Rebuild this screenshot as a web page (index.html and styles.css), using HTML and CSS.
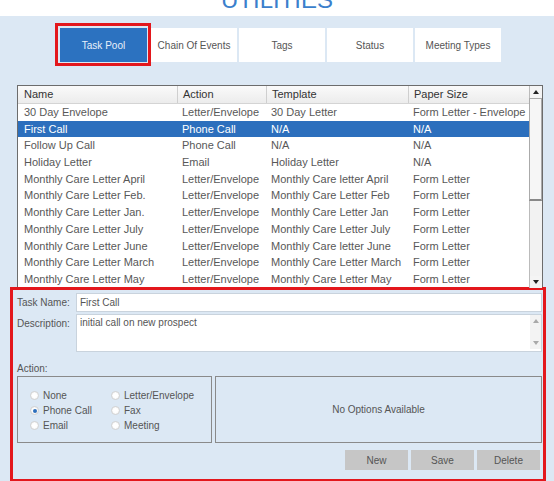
FILE: index.html
```html
<!DOCTYPE html>
<html lang="en">
<head>
  <meta charset="UTF-8" />
  <title>Utilities - Task Pool</title>
  <link rel="stylesheet" href="styles.css">
</head>
<body>

<header class="title">
  <h1>UTILITIES</h1>
</header>

<nav class="tabs">
  <div class="tab-mark">
    <span class="tab active">Task Pool</span>
  </div>
  <span class="tab">Chain Of Events</span>
  <span class="tab">Tags</span>
  <span class="tab">Status</span>
  <span class="tab">Meeting Types</span>
</nav>

<section class="grid">
  <div class="grid-body">
    <div class="row head">
      <span>Name</span><span>Action</span><span>Template</span><span>Paper Size</span>
    </div>
    <div class="row"><span>30 Day Envelope</span><span>Letter/Envelope</span><span>30 Day Letter</span><span>Form Letter - Envelope</span></div>
    <div class="row selected"><span>First Call</span><span>Phone Call</span><span>N/A</span><span>N/A</span></div>
    <div class="row"><span>Follow Up Call</span><span>Phone Call</span><span>N/A</span><span>N/A</span></div>
    <div class="row"><span>Holiday Letter</span><span>Email</span><span>Holiday Letter</span><span>N/A</span></div>
    <div class="row"><span>Monthly Care Letter April</span><span>Letter/Envelope</span><span>Monthly Care letter April</span><span>Form Letter</span></div>
    <div class="row"><span>Monthly Care Letter Feb.</span><span>Letter/Envelope</span><span>Monthly Care Letter Feb</span><span>Form Letter</span></div>
    <div class="row"><span>Monthly Care Letter Jan.</span><span>Letter/Envelope</span><span>Monthly Care Letter Jan</span><span>Form Letter</span></div>
    <div class="row"><span>Monthly Care Letter July</span><span>Letter/Envelope</span><span>Monthly Care Letter July</span><span>Form Letter</span></div>
    <div class="row"><span>Monthly Care Letter June</span><span>Letter/Envelope</span><span>Monthly Care letter June</span><span>Form Letter</span></div>
    <div class="row"><span>Monthly Care Letter March</span><span>Letter/Envelope</span><span>Monthly Care Letter March</span><span>Form Letter</span></div>
    <div class="row"><span>Monthly Care Letter May</span><span>Letter/Envelope</span><span>Monthly Care Letter May</span><span>Form Letter</span></div>
  </div>
  <div class="scrollbar">
    <span class="arrow up"></span>
    <span class="thumb"></span>
    <span class="track"></span>
    <span class="arrow down"></span>
  </div>
</section>

<section class="editor">
  <div class="field">
    <label>Task Name:</label>
    <div class="input">First Call</div>
  </div>
  <div class="field">
    <label>Description:</label>
    <div class="input textarea">
      <span>initial call on new prospect</span>
      <span class="ta-scroll"><i class="tri up"></i><i class="tri down"></i></span>
    </div>
  </div>

  <div class="action-label">Action:</div>
  <div class="action-row">
    <div class="group radios">
      <div class="radio"><i></i>None</div>
      <div class="radio"><i></i>Letter/Envelope</div>
      <div class="radio checked"><i></i>Phone Call</div>
      <div class="radio"><i></i>Fax</div>
      <div class="radio"><i></i>Email</div>
      <div class="radio"><i></i>Meeting</div>
    </div>
    <div class="group options">No Options Available</div>
  </div>

  <div class="buttons">
    <button>New</button>
    <button>Save</button>
    <button>Delete</button>
  </div>
</section>

</body>
</html>
```

FILE: styles.css
```css
body {
  margin: 0;
  background: #dce8f4;
  font-family: "Liberation Sans", Arial, sans-serif;
  color: #555;
}

/* page title, scrolled so only its lower part shows */
.title {
  height: 16px;
  overflow: hidden;
  background: #fff;
  text-align: center;
}

.title h1 {
  margin: -12px 0 0;
  font-size: 24px;
  line-height: 24px;
  font-weight: normal;
  color: #3b7fcc;
}

/* tabs */
.tabs {
  display: flex;
  align-items: flex-start;
  gap: 2px;
  margin-top: 7px;
  padding-left: 55px;
  height: 62px;
}

.tab-mark {
  border: 3px solid #e3171c;
  padding: 2px 1px 1px 2px;
  margin-right: -2px;
}

.tab {
  display: flex;
  align-items: center;
  justify-content: center;
  width: 86px;
  height: 34px;
  margin-top: 5px;
  background: #fff;
  font-size: 10px;
  color: #555;
}

.tab.active {
  margin-top: 0;
  width: 87px;
  background: #2c72c0;
  color: #e8f0fa;
}

/* task grid */
.grid {
  display: flex;
  margin-left: 17px;
  width: 524px;
  height: 202px;
  border: 1px solid #6c6c6c;
  background: #fff;
  overflow: hidden;
}

.grid-body {
  flex: 1;
}

.row {
  display: grid;
  grid-template-columns: 159px 89px 142px 1fr;
  height: 16.7px;
  line-height: 16.7px;
  font-size: 11px;
  white-space: nowrap;
  color: #585858;
}

.row span {
  padding-left: 5px;
  overflow: hidden;
}

.row span:first-child {
  padding-left: 6px;
}

.row.head {
  height: 17px;
  line-height: 17px;
  background: linear-gradient(#fafafa, #ececec);
  border-bottom: 1px solid #d4d4d4;
  color: #333;
}

.row.head span + span {
  border-left: 1px solid #cfcfcf;
}

.row.selected {
  background: #2c6fbd;
  color: #fff;
}

.scrollbar {
  display: flex;
  flex-direction: column;
  width: 12px;
  border-left: 1px solid #bbb;
  background: #f2f2f2;
}

.scrollbar .arrow {
  height: 12px;
  display: flex;
  align-items: center;
  justify-content: center;
  background: #f4f4f4;
}

.scrollbar .arrow::after {
  content: "";
  border-left: 3px solid transparent;
  border-right: 3px solid transparent;
}

.scrollbar .up::after {
  border-bottom: 4px solid #222;
}

.scrollbar .down::after {
  border-top: 4px solid #222;
}

.scrollbar .thumb {
  height: 100px;
  margin: 0 0 0 -1px;
  background: #f6f6f6;
  border: 1px solid #aaa;
  border-bottom: 2px solid #888;
}

.scrollbar .track {
  flex: 1;
}

/* editor panel */
.editor {
  margin: -2px 0 0 10px;
  width: 525px;
  height: 186px;
  border: 3px solid #e3171c;
  padding: 3px 1px 0 4px;
  font-size: 10px;
}

.field {
  display: flex;
  margin-bottom: 2px;
}

.field label {
  width: 59px;
  padding-top: 4px;
  color: #555;
}

.input {
  flex: 1;
  height: 17px;
  line-height: 17px;
  padding-left: 3px;
  background: #fff;
  border: 1px solid #c9d3dd;
  color: #555;
}

.textarea {
  display: flex;
  justify-content: space-between;
  align-items: flex-start;
  height: 35px;
  line-height: 14px;
  padding-top: 1px;
}

.ta-scroll {
  display: flex;
  flex-direction: column;
  justify-content: space-between;
  align-items: center;
  width: 11px;
  height: 34px;
  margin-top: -1px;
  padding: 4px 0;
  box-sizing: border-box;
  background: #f3f3f3;
}

.tri {
  border-left: 3px solid transparent;
  border-right: 3px solid transparent;
}

.tri.up {
  border-bottom: 4px solid #a9a9a9;
}

.tri.down {
  border-top: 4px solid #a9a9a9;
}

.action-label {
  margin-top: 11px;
  height: 13px;
}

.action-row {
  display: flex;
  gap: 3px;
}

.group {
  height: 65px;
  border: 1px solid #8a8a8a;
}

.radios {
  display: grid;
  grid-template-columns: 81px 1fr;
  grid-auto-rows: 15px;
  align-content: start;
  width: 195px;
  height: 67px;
  padding: 11px 0 0 12px;
  box-sizing: border-box;
}

.radio {
  display: flex;
  align-items: center;
}

.radio i {
  display: flex;
  align-items: center;
  justify-content: center;
  width: 7px;
  height: 7px;
  margin-right: 4px;
  border: 1px solid #d2d2d2;
  border-radius: 50%;
  background: radial-gradient(#fff 40%, #ececec);
}

.radio.checked i::after {
  content: "";
  width: 4px;
  height: 4px;
  border-radius: 50%;
  background: #2c6fbd;
}

.options {
  flex: 1;
  display: flex;
  align-items: center;
  justify-content: center;
}

.buttons {
  display: flex;
  justify-content: flex-end;
  gap: 3px;
  margin: 7px 2px 0 0;
}

.buttons button {
  width: 63px;
  height: 20px;
  border: 0;
  background: #c6c6c6;
  font-family: inherit;
  font-size: 10px;
  color: #555;
}
```
